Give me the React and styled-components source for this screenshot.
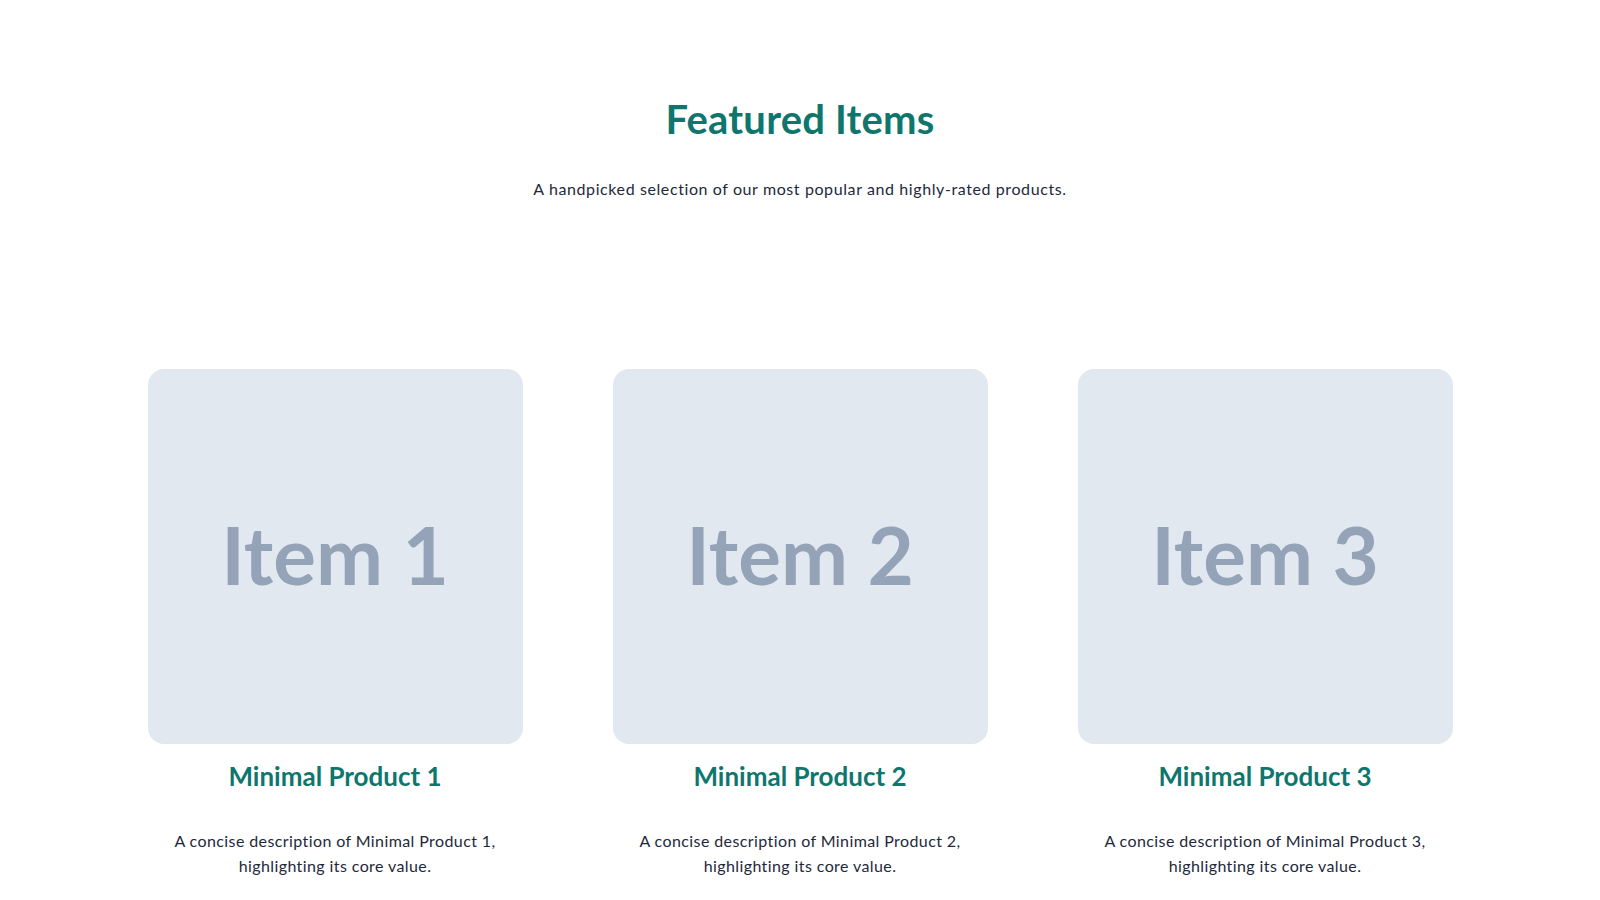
import styled, { createGlobalStyle } from "styled-components";

const GlobalStyle = createGlobalStyle`
  body {
    margin: 0;
    background: #ffffff;
    font-family: "Lato", "Noto Sans", sans-serif;
    color: #1e293b;
  }
`;

const products = [
  { id: 1, name: "Minimal Product 1" },
  { id: 2, name: "Minimal Product 2" },
  { id: 3, name: "Minimal Product 3" },
];

const Section = styled.section`
  padding: 95px 0 40px;
`;

const Header = styled.header`
  text-align: center;
`;

const Title = styled.h2`
  margin: 0;
  font-size: 40px;
  line-height: 1.2;
  font-weight: 700;
  letter-spacing: 0.2px;
  color: #0f766e;
`;

const Subtitle = styled.p`
  margin: 34px 0 0;
  font-size: 16px;
  line-height: 1.5;
  letter-spacing: 0.6px;
  color: #1e293b;
`;

const Grid = styled.div`
  display: grid;
  grid-template-columns: repeat(3, 375px);
  justify-content: center;
  column-gap: 90px;
  margin-top: 168px;
`;

const Card = styled.article`
  display: flex;
  flex-direction: column;
  align-items: center;
  text-align: center;
`;

const Thumb = styled.div`
  width: 375px;
  height: 375px;
  box-sizing: border-box;
  padding-bottom: 6px;
  border-radius: 16px;
  background: #e2e8f0;
  display: flex;
  align-items: center;
  justify-content: center;
  font-family: "Lato", sans-serif;
  font-weight: 700;
  font-size: 80px;
  color: #94a3b8;
`;

const Name = styled.h3`
  margin: 17px 0 0;
  font-size: 26px;
  line-height: 1.2;
  font-weight: 700;
  color: #0f766e;
`;

const Desc = styled.p`
  margin: 36px 0 0;
  padding: 0 16px;
  font-size: 16px;
  line-height: 25px;
  letter-spacing: 0.4px;
  color: #1e293b;
`;

export default function App() {
  return (
    <>
      <GlobalStyle />
      <Section>
        <Header>
          <Title>Featured Items</Title>
          <Subtitle>A handpicked selection of our most popular and highly-rated products.</Subtitle>
        </Header>
        <Grid>
          {products.map((p) => (
            <Card key={p.id}>
              <Thumb>Item {p.id}</Thumb>
              <Name>{p.name}</Name>
              <Desc>
                A concise description of {p.name}, highlighting its core value.
              </Desc>
            </Card>
          ))}
        </Grid>
      </Section>
    </>
  );
}
